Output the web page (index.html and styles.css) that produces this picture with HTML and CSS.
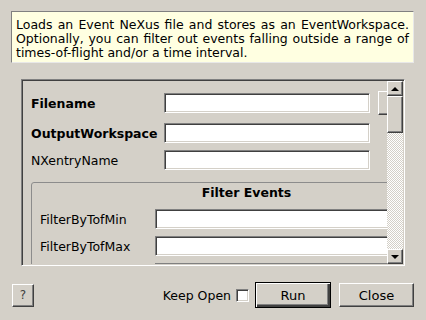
FILE: index.html
```html
<!DOCTYPE html>
<html lang="en">
<head>
    <meta charset="UTF-8">
    <title>LoadEventNexus</title>
    <link rel="stylesheet" href="styles.css">
</head>
<body>
    <div class="dialog">
        <div class="desc">Loads an Event NeXus file and stores as an EventWorkspace. Optionally, you can filter out events falling outside a range of times-of-flight and/or a time interval.</div>

        <div class="scroll-frame">
            <div class="viewport">
                <div class="form">
                    <div class="row first">
                        <span class="label bold">Filename</span>
                        <span class="field"></span>
                        <span class="btn browse"></span>
                    </div>
                    <div class="row second">
                        <span class="label bold">OutputWorkspace</span>
                        <span class="field"></span>
                    </div>
                    <div class="row third">
                        <span class="label">NXentryName</span>
                        <span class="field"></span>
                    </div>
                    <div class="group">
                        <div class="group-title">Filter Events</div>
                        <div class="grow">
                            <span class="glabel">FilterByTofMin</span>
                            <span class="field wide"></span>
                        </div>
                        <div class="grow">
                            <span class="glabel">FilterByTofMax</span>
                            <span class="field wide"></span>
                        </div>
                        <div class="grow">
                            <span class="glabel"></span>
                            <span class="field wide"></span>
                        </div>
                    </div>
                </div>
            </div>
            <div class="scrollbar">
                <div class="sb-btn"><span class="arrow up"></span></div>
                <div class="sb-thumb"></div>
                <div class="sb-track"></div>
                <div class="sb-btn"><span class="arrow down"></span></div>
            </div>
        </div>

        <div class="buttons">
            <span class="btn help">?</span>
            <span class="spacer"></span>
            <span class="keep">Keep Open</span>
            <span class="check"></span>
            <span class="btn run">Run</span>
            <span class="btn close">Close</span>
        </div>
    </div>
</body>
</html>
```

FILE: styles.css
```css
body, html {
    margin: 0;
    padding: 0;
    width: 100%;
    height: 100%;
    background: #d4d0c8;
    font-family: "DejaVu Sans", sans-serif;
    font-size: 12.5px;
    color: #000;
}
.dialog {
    display: flex;
    flex-direction: column;
    height: 320px;
    box-sizing: border-box;
    padding: 11px 12px 12px 11px;
}
.desc {
    height: 52px;
    box-sizing: border-box;
    padding: 6px 4px 0 4px;
    background: #ffffe1;
    border: 1px solid;
    border-color: #808080 #e8e8e8 #e8e8e8 #808080;
    text-align: justify;
    line-height: 14px;
}
.scroll-frame {
    display: flex;
    height: 187px;
    box-sizing: border-box;
    margin: 16px 9px 0 10px;
    border: 1px solid;
    border-color: #808080 #fff #fff #808080;
    box-shadow: inset 1px 1px 0 #404040, inset -1px -1px 0 #d4d0c8;
    padding: 1px;
}
.viewport {
    flex: 1;
    overflow: hidden;
}
.form {
    width: 450px;
    padding: 10px 0 0 8px;
}
.row {
    display: flex;
    align-items: center;
    height: 20px;
}
.row.first {
    height: 24px;
}
.row.second {
    margin-top: 8px;
}
.row.third {
    margin-top: 7px;
}
.label {
    width: 133px;
    flex: none;
}
.bold {
    font-weight: bold;
}
.field {
    display: block;
    flex: none;
    width: 206px;
    height: 20px;
    box-sizing: border-box;
    background: #fff;
    border: 1px solid;
    border-color: #808080 #fff #fff #808080;
    box-shadow: inset 1px 1px 0 #404040, inset -1px -1px 0 #d4d0c8;
}
.field.wide {
    width: 300px;
}
.btn {
    display: flex;
    align-items: center;
    justify-content: center;
    box-sizing: border-box;
    background: #d4d0c8;
    border: 1px solid;
    border-color: #fff #404040 #404040 #fff;
    box-shadow: inset -1px -1px 0 #808080;
}
.browse {
    width: 60px;
    height: 24px;
    margin-left: 8px;
}
.group {
    margin-top: 12px;
    width: 431px;
    height: 100px;
    box-sizing: border-box;
    border: 1px solid #8c8c8c;
    border-radius: 3px;
    padding-left: 8px;
}
.group-title {
    height: 20px;
    line-height: 20px;
    margin-left: -8px;
    text-align: center;
    font-weight: bold;
}
.grow {
    display: flex;
    align-items: center;
    height: 20px;
    margin-top: 6px;
}
.grow + .grow {
    margin-top: 7px;
}
.glabel {
    width: 115px;
    flex: none;
}
.scrollbar {
    width: 16px;
    flex: none;
    display: flex;
    flex-direction: column;
}
.sb-btn {
    height: 15px;
    box-sizing: border-box;
    display: flex;
    align-items: center;
    justify-content: center;
    background: #d4d0c8;
    border: 1px solid;
    border-color: #fff #404040 #404040 #fff;
    box-shadow: inset -1px -1px 0 #808080;
}
.sb-thumb {
    height: 37px;
    box-sizing: border-box;
    background: #d4d0c8;
    border: 1px solid;
    border-color: #fff #404040 #404040 #fff;
    box-shadow: inset -1px -1px 0 #808080;
}
.sb-track {
    flex: 1;
    background: repeating-conic-gradient(#fff 0 25%, #d4d0c8 0 50%) 0 0 / 2px 2px;
}
.arrow {
    width: 0;
    height: 0;
    border-left: 4px solid transparent;
    border-right: 4px solid transparent;
}
.arrow.up {
    border-bottom: 4px solid #000;
}
.arrow.down {
    border-top: 4px solid #000;
}
.buttons {
    display: flex;
    align-items: center;
    height: 26px;
    margin-top: 16px;
    padding-left: 1px;
}
.help {
    width: 22px;
    height: 23px;
    color: #404040;
    font-size: 12px;
}
.spacer {
    flex: 1;
}
.keep {
    margin-right: 5px;
}
.check {
    width: 13px;
    height: 13px;
    box-sizing: border-box;
    background: #fff;
    border: 1px solid;
    border-color: #808080 #fff #fff #808080;
    box-shadow: inset 1px 1px 0 #404040, inset -1px -1px 0 #d4d0c8;
    margin-right: 6px;
}
.run {
    width: 76px;
    height: 26px;
    border: 1px solid #000;
    box-shadow: inset 1px 1px 0 #fff, inset -2px -2px 0 #404040, inset -3px -3px 0 #808080;
    margin-right: 8px;
    font-size: 13px;
}
.close {
    width: 75px;
    height: 24px;
    font-size: 13px;
}
```
